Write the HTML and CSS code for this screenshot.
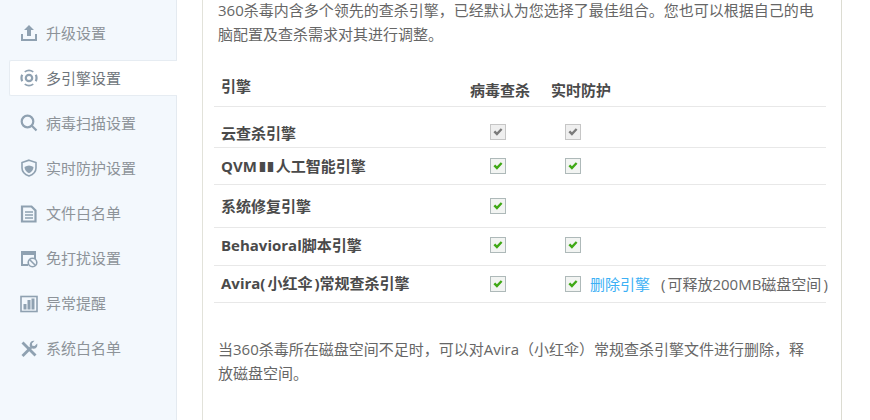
FILE: index.html
```html
<!DOCTYPE html>
<html lang="zh-CN">
<head>
    <meta charset="UTF-8">
    <title>多引擎设置</title>
    <link rel="stylesheet" href="styles.css">
</head>
<body>
    <div class="sidebar">
        <div class="nav-item">
            <svg class="nav-icon" viewBox="0 0 18 18"><path d="M9 1l5 5h-3v6H7V6H4z"/><path d="M1 10h2v5h12v-5h2v7H1z"/></svg>
            <span>升级设置</span>
        </div>
        <div class="nav-item active">
            <svg class="nav-icon" viewBox="0 0 18 18"><path class="line" d="M4.700 2.860A7.500 7.500 0 0 1 13.300 2.860M13.300 15.140A7.500 7.500 0 0 1 4.700 15.140"/><path class="line thick" d="M2.200 5.830A7.500 7.500 0 0 0 2.200 12.170M15.800 5.830A7.500 7.500 0 0 1 15.800 12.170"/><circle class="line thick" cx="9" cy="9" r="3.200"/></svg>
            <span>多引擎设置</span>
        </div>
        <div class="nav-item">
            <svg class="nav-icon" viewBox="0 0 18 18"><circle class="line thick" cx="7.500" cy="7.500" r="5.800"/><path class="line thick" d="M11.800 11.800l4.700 4.700"/></svg>
            <span>病毒扫描设置</span>
        </div>
        <div class="nav-item">
            <svg class="nav-icon" viewBox="0 0 18 18"><path class="line" d="M9 1.200l7 2.300v5.500c0 4-3 6.500-7 8-4-1.500-7-4-7-8V3.500z"/><path d="M4.500 8c3-2 6-2 9 0 0 3-2 5-4.500 6.200C6.500 13 4.500 11 4.500 8z"/></svg>
            <span>实时防护设置</span>
        </div>
        <div class="nav-item">
            <svg class="nav-icon" viewBox="0 0 18 18"><path class="line thick" d="M2 1.500h9.500l4 4v11H2z"/><path class="line" d="M5 7h8M5 10h8M5 13h8"/></svg>
            <span>文件白名单</span>
        </div>
        <div class="nav-item">
            <svg class="nav-icon" viewBox="0 0 18 18"><path d="M1 1h15v8h-2V5H3v9h5v2H1z"/><circle class="line" cx="12.500" cy="12.500" r="4.300"/><path class="line" d="M9.500 9.500l6 6"/></svg>
            <span>免打扰设置</span>
        </div>
        <div class="nav-item">
            <svg class="nav-icon" viewBox="0 0 18 18"><rect class="line" x="1" y="1.500" width="16" height="15"/><path d="M3.500 9h3v5.500h-3zM7.500 5h3v9.500h-3zM11.500 3.500h3v11h-3z"/></svg>
            <span>异常提醒</span>
        </div>
        <div class="nav-item">
            <svg class="nav-icon" viewBox="0 0 18 18"><path class="line heavy" d="M2.500 2.500L15.500 15.500"/><path class="line heavy" d="M2.500 16L11 7.500"/><path d="M14.500.8l-2.600 2.600.4 2.300 2.300.4 2.600-2.600c.6 2.400-.5 5-3.200 5.300-1.200.1-2.200-.3-3-1.100C9.900 6.900 9.600 5.900 9.700 4.700 10 2 12.100.3 14.500.8z"/></svg>
            <span>系统白名单</span>
        </div>
    </div>

    <div class="panel">
        <p class="desc">360杀毒内含多个领先的查杀引擎，已经默认为您选择了最佳组合。您也可以根据自己的电脑配置及查杀需求对其进行调整。</p>

        <svg class="defs" width="0" height="0">
            <symbol id="tick" viewBox="0 0 16 16"><path d="M2.800 8.200l2-1.900 2 2 4.400-4.600 1.900 1.800-6.300 6.800z"/></symbol>
        </svg>

        <div class="engines">
            <div class="row head">
                <div class="name">引擎</div>
                <div class="col-a">病毒查杀</div>
                <div class="col-b">实时防护</div>
            </div>
            <div class="row first">
                <div class="name">云查杀引擎</div>
                <div class="col-a"><span class="check off"><svg><use href="#tick"/></svg></span></div>
                <div class="col-b"><span class="check off"><svg><use href="#tick"/></svg></span></div>
            </div>
            <div class="row">
                <div class="name">QVM<span class="roman">Ⅱ</span>人工智能引擎</div>
                <div class="col-a"><span class="check"><svg><use href="#tick"/></svg></span></div>
                <div class="col-b"><span class="check"><svg><use href="#tick"/></svg></span></div>
            </div>
            <div class="row tall">
                <div class="name">系统修复引擎</div>
                <div class="col-a"><span class="check"><svg><use href="#tick"/></svg></span></div>
                <div class="col-b"></div>
            </div>
            <div class="row raised">
                <div class="name">Behavioral脚本引擎</div>
                <div class="col-a"><span class="check"><svg><use href="#tick"/></svg></span></div>
                <div class="col-b"><span class="check"><svg><use href="#tick"/></svg></span></div>
            </div>
            <div class="row last">
                <div class="name">Avira(<span class="inner">小红伞</span>)常规查杀引擎</div>
                <div class="col-a"><span class="check"><svg><use href="#tick"/></svg></span></div>
                <div class="col-b">
                    <span class="check"><svg><use href="#tick"/></svg></span>
                    <a class="del" href="#">删除引擎</a>
                    <span class="note">(<span class="inner">可释放200MB磁盘空间</span>)</span>
                </div>
            </div>
        </div>

        <p class="desc tip">当360杀毒所在磁盘空间不足时，可以对Avira（小红伞）常规查杀引擎文件进行删除，释放磁盘空间。</p>
    </div>
</body>
</html>
```

FILE: styles.css
```css
body, html {
    margin: 0;
    padding: 0;
    width: 870px;
    height: 420px;
    overflow: hidden;
    background: #fff;
}
body {
    display: flex;
    font-family: "Open Sans", "Noto Sans CJK SC", sans-serif;
    font-size: 15px;
    color: #666;
}
.sidebar {
    width: 177px;
    height: 420px;
    box-sizing: border-box;
    padding: 15px 0 0 9px;
    background: #f3f8fd;
    border-right: 1px solid #e4eaf0;
    flex: none;
}
.nav-item {
    display: flex;
    align-items: center;
    height: 36px;
    margin-bottom: 9.15px;
    padding-left: 11px;
    color: #8d9399;
    box-sizing: border-box;
}
.nav-item span {
    margin-bottom: 2px;
}
.nav-item.active {
    background: #fff;
    color: #6f767c;
    border: 1px solid #e6ecf2;
    border-right: 0;
    border-radius: 2px 0 0 2px;
    margin-right: -1px;
    padding-left: 10px;
}
.nav-icon {
    width: 18px;
    height: 18px;
    margin-right: 8px;
    fill: #8fa1b1;
    flex: none;
}
.nav-icon .line {
    fill: none;
    stroke: #8fa1b1;
    stroke-width: 1.6;
}
.nav-icon .thick {
    stroke-width: 2.2;
}
.nav-icon .heavy {
    stroke-width: 2.8;
}
.panel {
    width: 640px;
    height: 420px;
    box-sizing: border-box;
    margin-left: 25px;
    padding: 0 0 0 15px;
    border-left: 1px solid #e2e2da;
    border-right: 1px solid #dcdcd2;
    flex: none;
}
.desc {
    margin: -2px 0 0;
    width: 605px;
    line-height: 24px;
}
.defs {
    position: absolute;
}
.engines {
    margin: 29px 0 0 -4px;
    width: 612px;
}
.row {
    display: flex;
    align-items: center;
    height: 37px;
    box-sizing: border-box;
    border-bottom: 1px solid #e8e8e8;
    font-weight: 700;
    color: #4a4a4a;
}
.row.head {
    height: 32px;
    align-items: flex-start;
}
.row.first {
    height: 41px;
    padding-top: 10px;
}
.row.tall {
    height: 43px;
}
.row.raised {
    height: 38px;
    padding-bottom: 3px;
}
.row.last {
    padding-bottom: 1px;
}
.name {
    width: 256px;
    padding: 0 0 2px 7px;
    box-sizing: border-box;
    flex: none;
}
.head .name, .first .name {
    padding-bottom: 0;
}
.roman {
    display: inline-block;
    width: 19px;
    text-align: center;
    font-family: "DejaVu Sans", sans-serif;
    font-size: 14px;
    transform: scaleX(2);
}
.inner {
    margin: 0 2px;
}
.col-a {
    width: 81px;
    flex: none;
}
.col-b {
    display: flex;
    align-items: center;
    flex: none;
    white-space: nowrap;
}
.head .col-a, .head .col-b {
    padding-top: 4px;
}
.col-a .check {
    margin-left: 20px;
}
.col-b .check {
    margin-left: 14px;
}
.check {
    display: block;
    width: 16px;
    height: 16px;
    box-sizing: border-box;
    border: 1px solid #aeb9b9;
    background: #f2f4f2;
    fill: #3fa815;
}
.check svg {
    display: block;
    width: 14px;
    height: 14px;
}
.check.off {
    border-color: #c6c6c6;
    background: #efefef;
    fill: #7b7b7b;
}
.del {
    margin-left: 9px;
    color: #3cb0f5;
    font-weight: 400;
    text-decoration: none;
}
.note {
    margin-left: 11px;
    color: #666;
    font-weight: 400;
}
.desc.tip {
    width: 596px;
    margin-top: 34px;
}
```
